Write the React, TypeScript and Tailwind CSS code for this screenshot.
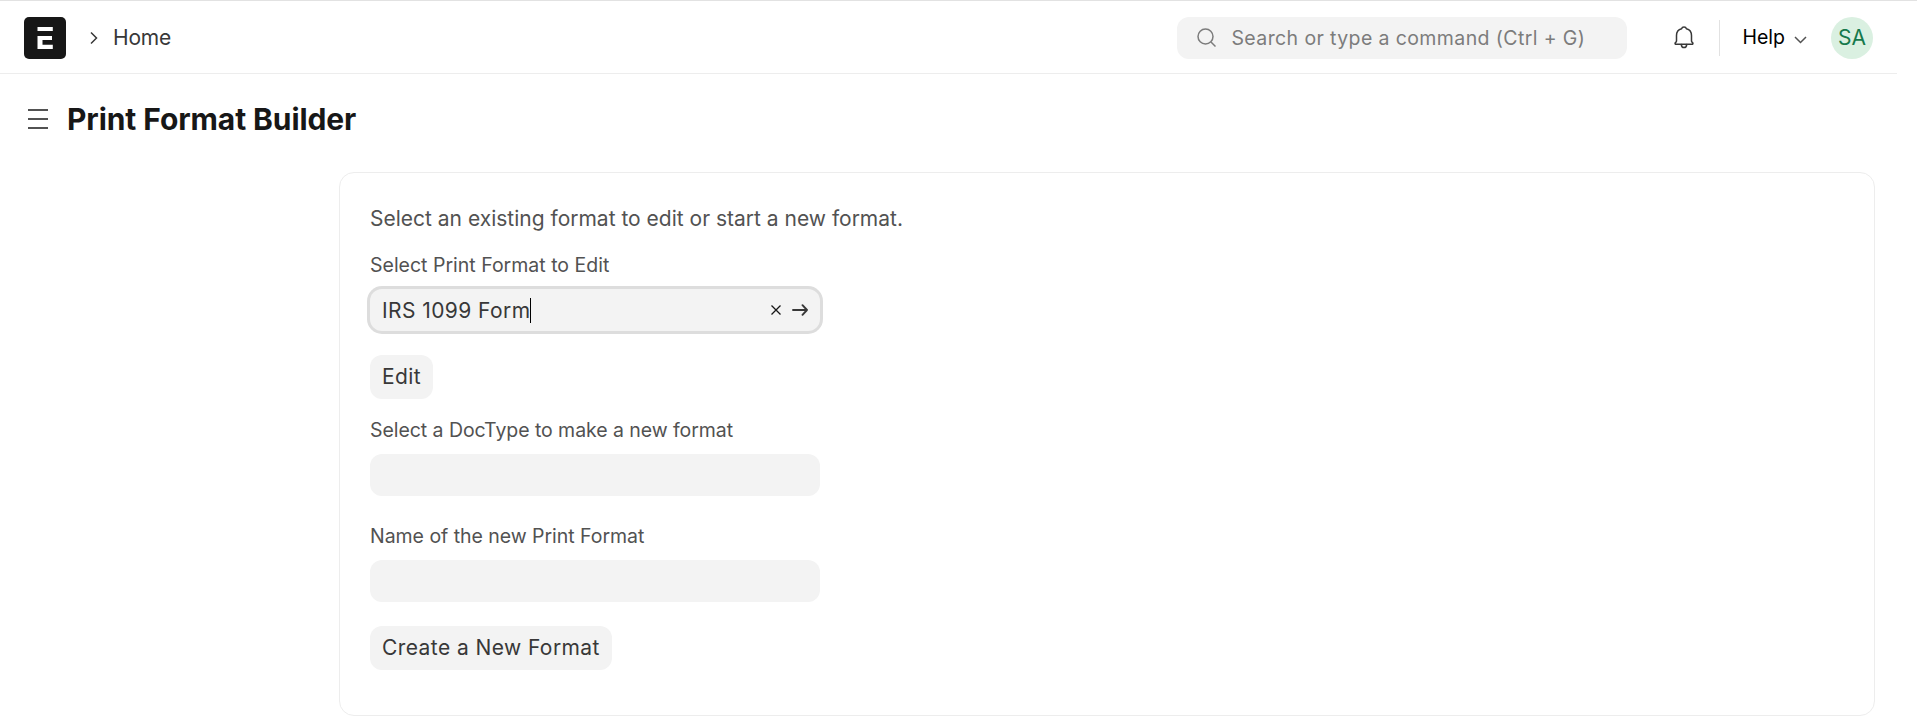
import React, { useState } from 'react';

const inputClass =
  'block h-[42px] w-[450px] rounded-xl bg-[#f3f3f3] px-3 text-[21px] tracking-[0.02em] text-[#383838] outline-none';
const buttonClass =
  'block h-11 rounded-xl bg-[#f3f3f3] px-3 text-[21px] leading-[44px] tracking-[0.02em] text-[#383838]';
const labelClass = 'block h-[30px] text-[19.5px] leading-[30px] text-[#525252]';

const Logo: React.FC = () => (
  <svg width="42" height="42" viewBox="0 0 42 42">
    <rect width="42" height="42" rx="5" fill="#171717" />
    <path d="M13.500 10h15.300v4H13.500zM13.500 19h14.500v4h-9.500v4.700h10.300V32H13.500z" fill="#fff" />
  </svg>
);

const Bell: React.FC = () => (
  <svg width="20" height="23" viewBox="0 0 20 23" fill="none" stroke="#383838" strokeWidth="1.5" strokeLinejoin="round" strokeLinecap="round">
    <path d="M1.300 18.200h17.400c1-1.600-1.200-1.700-1.200-3.200V9.500c0-3.400-2-6-5.100-6.800C11.800.5 8.200.5 7.600 2.700 4.500 3.500 2.500 6.100 2.500 9.500V15c0 1.500-2.200 1.600-1.200 3.200z" />
    <path d="M7.300 18.600c.3 4 5.100 4 5.400 0" />
  </svg>
);

const Navbar: React.FC = () => (
  <header className="mr-5 flex h-[73px] items-center border-b border-[#ededed] px-6 pt-px">
    <Logo />
    <svg className="ml-6" width="8" height="14" viewBox="0 0 8 14" fill="none" stroke="#383838" strokeWidth="1.5">
      <path d="M1 1.500 6.500 7 1 12.500" />
    </svg>
    <a className="ml-[15px] text-[21px] leading-[42px] tracking-[-0.01em] text-[#383838]">Home</a>
    <div className="ml-auto flex h-[42px] w-[450px] items-center rounded-xl bg-[#f3f3f3] pl-[20px]">
      <svg width="19" height="19" viewBox="0 0 19 19" fill="none" stroke="#7c7c7c" strokeWidth="1.5">
        <circle cx="8.500" cy="8.500" r="7.500" />
        <path d="m14 14 4.500 4.500" />
      </svg>
      <span className="ml-[15px] pt-0.5 text-[19.5px] tracking-[0.02em] text-[#7c7c7c]">Search or type a command (Ctrl + G)</span>
    </div>
    <button className="ml-[47px]">
      <Bell />
    </button>
    <div className="ml-[25px] h-9 w-px bg-[#e2e2e2]" />
    <button className="ml-[22px] flex items-center pt-px text-[19.5px] text-black">
      Help
      <svg className="mt-[3px] ml-[9px]" width="13" height="8" viewBox="0 0 13 8" fill="none" stroke="#525252" strokeWidth="1.500">
        <path d="m1 1 5.500 5.500L12 1" />
      </svg>
    </button>
    <div className="ml-6 h-[42px] w-[42px] rounded-full bg-[#daf0e1] text-center text-[21px] leading-[42px] text-[#16794c]">SA</div>
  </header>
);

const App: React.FC = () => {
  const [format, setFormat] = useState('IRS 1099 Form');
  const [docType, setDocType] = useState('');
  const [name, setName] = useState('');

  return (
    <div className="h-[718px] overflow-hidden border-t border-[#e2e2e2] bg-white font-['Inter',sans-serif]">
      <Navbar />
      <div className="flex h-[98px] items-center pb-2 pl-7">
        <svg width="20" height="20" viewBox="0 0 20 20" stroke="#525252" strokeWidth="1.800">
          <path d="M0 1h20M0 10h20M0 19h20" />
        </svg>
        <h1 className="ml-[19px] text-[30px] font-bold tracking-[-0.003em] text-[#171717]">Print Format Builder</h1>
      </div>

      <main className="ml-[339px] h-[544px] w-[1536px] rounded-[15px] border border-[#ededed] px-[30px] pt-[30px]">
        <p className="h-[32px] text-[21px] leading-[32px] text-[#525252]">
          Select an existing format to edit or start a new format.
        </p>
        <label className={`${labelClass} mt-[15px]`}>Select Print Format to Edit</label>
        <div className="mt-[9px] flex h-[42px] w-[450px] items-center rounded-xl bg-[#f3f3f3] px-3 ring-[3px] ring-[#dddddd]">
          <span className="pt-px text-[21px] tracking-[0.02em] text-[#383838]">{format}</span>
          <span className="-ml-px h-[25px] w-px bg-black" />
          <button className="ml-auto" onClick={() => setFormat('')}>
            <svg width="10" height="10" viewBox="0 0 10 10" stroke="#171717" strokeWidth="1.300">
              <path d="m.5.5 9 9M9.500.5l-9 9" />
            </svg>
          </button>
          <svg className="ml-[11px]" width="16" height="12" viewBox="0 0 16 12" fill="none" stroke="#383838" strokeWidth="1.900" strokeLinecap="round" strokeLinejoin="round">
            <path d="M1 6h14M10.500 1.200 15 6l-4.500 4.800" />
          </svg>
        </div>
        <button className={`${buttonClass} mt-6`}>Edit</button>

        <label className={`${labelClass} mt-4 tracking-[-0.003em]`}>Select a DocType to make a new format</label>
        <input className={`${inputClass} mt-[9px]`} value={docType} onChange={e => setDocType(e.target.value)} />

        <label className={`${labelClass} mt-[25px] tracking-[-0.002em]`}>Name of the new Print Format</label>
        <input className={`${inputClass} mt-[9px]`} value={name} onChange={e => setName(e.target.value)} />

        <button className={`${buttonClass} mt-6`}>Create a New Format</button>
      </main>
    </div>
  );
};

export default App;
